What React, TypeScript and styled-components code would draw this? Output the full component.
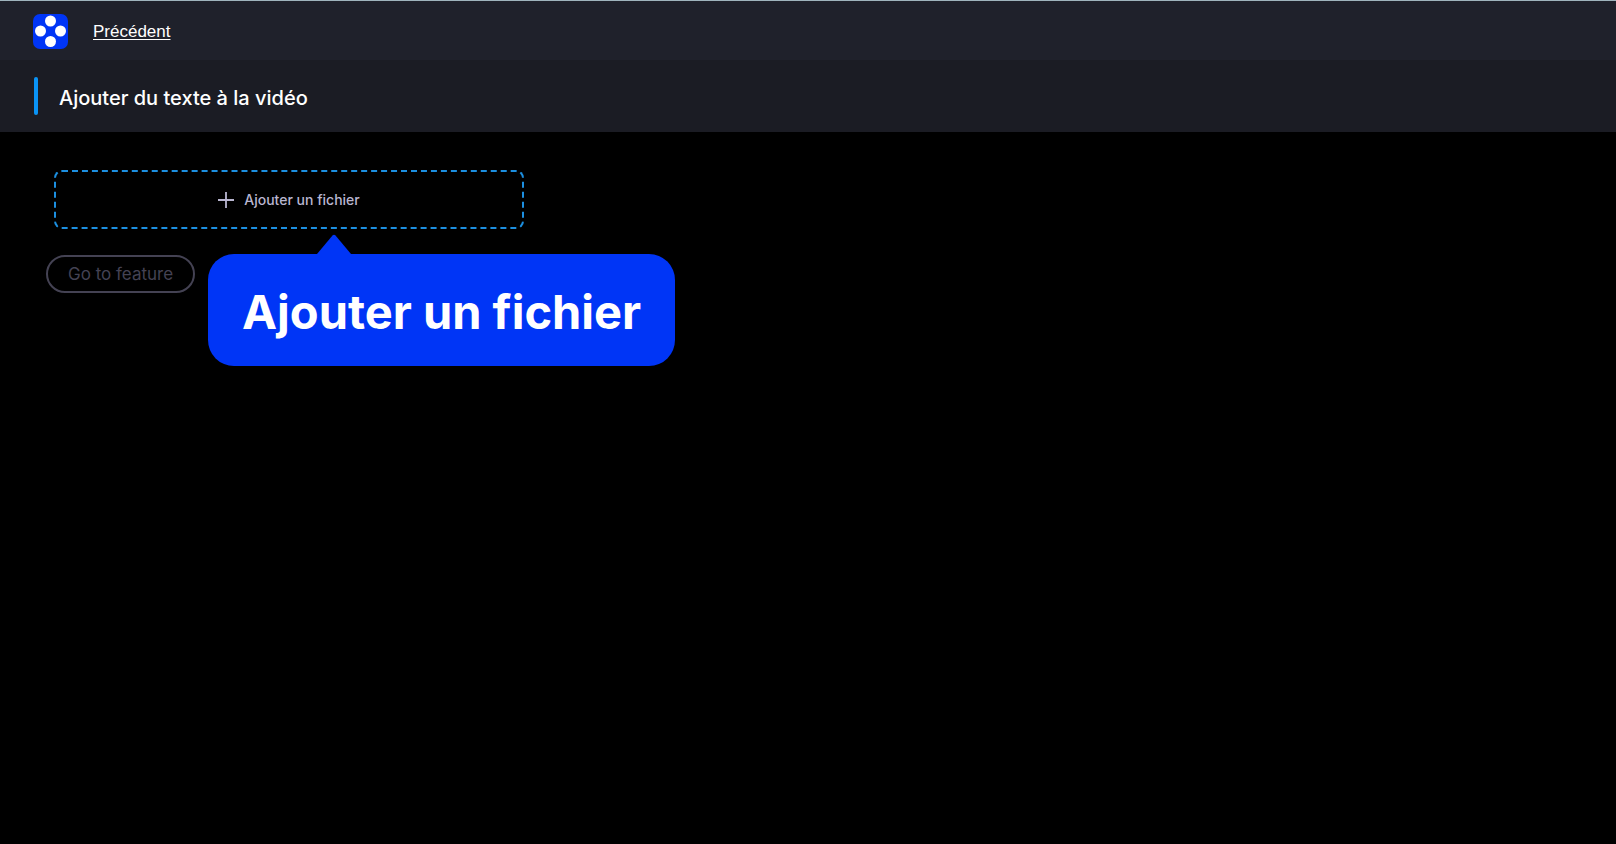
import React from "react";
import styled, { createGlobalStyle } from "styled-components";

const GlobalStyle = createGlobalStyle`
  *, *::before, *::after { box-sizing: border-box; }
  body {
    margin: 0;
    min-height: 100vh;
    background: #000;
    color: #fff;
    font-family: Inter, "Liberation Sans", sans-serif;
  }
`;

const Page = styled.div`
  display: flex;
  flex-direction: column;
  min-height: 100vh;
`;

const TopBar = styled.header`
  display: flex;
  align-items: center;
  gap: 25px;
  height: 60px;
  padding: 1px 33px 0;
  border-top: 1px solid #9fb4bd;
  background: #1f212b;
`;

const Logo = styled.svg`
  display: block;
  width: 35px;
  height: 35px;
`;

const BackLink = styled.a`
  padding-top: 2px;
  color: #fff;
  font-family: "Liberation Sans", Arial, sans-serif;
  font-size: 17px;
  line-height: 20px;
  text-decoration: underline;
  text-underline-offset: 2px;
`;

const TitleBar = styled.div`
  display: flex;
  align-items: center;
  gap: 21px;
  height: 72px;
  padding: 0 34px;
  background: #1b1c24;
`;

const Accent = styled.span`
  width: 4px;
  height: 38px;
  border-radius: 2px;
  background: #0a93f5;
`;

const Title = styled.h1`
  margin: 0;
  padding-top: 4px;
  font-size: 20px;
  font-weight: 500;
  line-height: 28px;
`;

const Content = styled.main`
  display: flex;
  flex: 1;
  flex-direction: column;
  align-items: flex-start;
  gap: 26px;
  padding: 38px 46px;
`;

const DropArea = styled.div`
  position: relative;
  width: 100%;
  max-width: 470px;
  margin-left: 8px;
`;

const AddFileButton = styled.button`
  display: flex;
  align-items: center;
  justify-content: center;
  gap: 10px;
  width: 100%;
  height: 59px;
  padding: 0;
  border: 2px dashed #1c8fe0;
  border-radius: 8px;
  background: transparent;
  color: #b9b6d0;
  font-family: inherit;
  font-size: 14px;
  font-weight: 500;
  cursor: pointer;
`;

const PlusIcon = styled.svg`
  display: block;
  width: 16px;
  height: 16px;
`;

const FeatureButton = styled.button`
  height: 38px;
  padding: 0 20px;
  border: 2px solid #444253;
  border-radius: 19px;
  background: transparent;
  color: #444253;
  font-family: inherit;
  font-size: 17px;
  font-weight: 400;
`;

const Callout = styled.div`
  position: absolute;
  top: 84px;
  left: 154px;
  padding: 30px 34px 26px;
  border-radius: 26px;
  background: #0035f6;
  font-size: 47px;
  font-weight: 700;
  line-height: 56px;
  white-space: nowrap;
`;

const CalloutArrow = styled.svg`
  position: absolute;
  bottom: 100%;
  left: 109px;
  display: block;
  width: 34px;
  height: 20px;
`;

export default function App() {
  return (
    <Page>
      <GlobalStyle />
      <TopBar>
        <Logo viewBox="0 0 35 35" aria-hidden="true">
          <rect width="35" height="35" rx="7" fill="#0035f6" />
          <g fill="#fff">
            <circle cx="17.5" cy="7" r="5.5" />
            <circle cx="7.5" cy="17" r="5.5" />
            <circle cx="27.5" cy="17" r="5.5" />
            <circle cx="17.5" cy="27.5" r="5.5" />
          </g>
        </Logo>
        <BackLink href="#">Précédent</BackLink>
      </TopBar>
      <TitleBar>
        <Accent />
        <Title>Ajouter du texte à la vidéo</Title>
      </TitleBar>
      <Content>
        <DropArea>
          <AddFileButton type="button">
            <PlusIcon viewBox="0 0 16 16" aria-hidden="true">
              <path d="M8 0V16M0 8H16" stroke="currentColor" strokeWidth="1.8" />
            </PlusIcon>
            Ajouter un fichier
          </AddFileButton>
          <Callout role="tooltip">
            <CalloutArrow viewBox="0 0 34 20" aria-hidden="true">
              <path d="M0 20L15.5 1.5Q17 0 18.5 1.5L34 20Z" fill="#0035f6" />
            </CalloutArrow>
            Ajouter un fichier
          </Callout>
        </DropArea>
        <FeatureButton type="button" disabled>
          Go to feature
        </FeatureButton>
      </Content>
    </Page>
  );
}
